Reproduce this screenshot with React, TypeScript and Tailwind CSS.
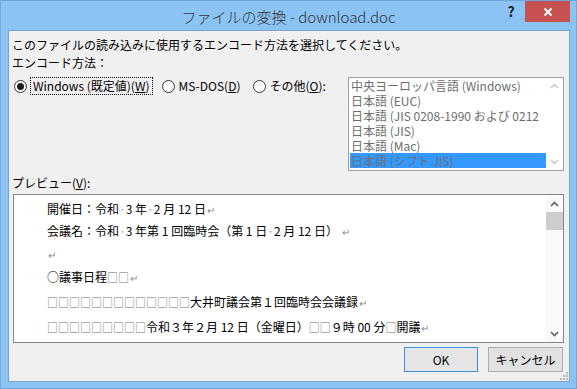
import React from "react";

const ui = { fontFamily: '"Noto Sans CJK JP", "Noto Sans", sans-serif' };

function Radio({ checked }: { checked?: boolean }) {
  return (
    <span className="w-[13px] h-[13px] rounded-full border border-[#333333] bg-white flex items-center justify-center shrink-0">
      {checked && <span className="w-[7px] h-[7px] rounded-full bg-[#1c1c1c]" />}
    </span>
  );
}

function Chevron({ up, color }: { up?: boolean; color: string }) {
  return (
    <svg width="9" height="6" viewBox="0 0 9 6">
      <path
        d={up ? "M1 5 L4.5 1.5 L8 5" : "M1 1 L4.5 4.5 L8 1"}
        fill="none"
        stroke={color}
        strokeWidth="1.6"
      />
    </svg>
  );
}

const Sp = () => <span className="text-[#9a9a9a]">·</span>;
const Ret = () => <span className="text-[#8a8a8a] text-[10px] ml-[1px]">↵</span>;
const Sq = ({ n }: { n: number }) => (
  <span className="text-[#707070] text-[11px]">{"□".repeat(n)}</span>
);

export default function App() {
  const encodings = [
    "中央ヨーロッパ言語 (Windows)",
    "日本語 (EUC)",
    "日本語 (JIS 0208-1990 および 0212",
    "日本語 (JIS)",
    "日本語 (Mac)",
    "日本語 (シフト JIS)",
  ];

  const lines: { h: string; node: React.ReactNode }[] = [
    {
      h: "h-[22px]",
      node: (
        <>
          開催日：令和<Sp />3 年<Sp />2 月 12 日<Ret />
        </>
      ),
    },
    {
      h: "h-[22px]",
      node: (
        <>
          会議名：令和<Sp />3 年第 1 回臨時会（第 1 日<Sp />2 月 12 日）&nbsp;<Ret />
        </>
      ),
    },
    { h: "h-[23px]", node: <Ret /> },
    {
      h: "h-[24px]",
      node: (
        <>
          ○議事日程<Sq n={2} />
          <Ret />
        </>
      ),
    },
    {
      h: "h-[25px]",
      node: (
        <>
          <Sq n={13} />大井町議会第１回臨時会会議録<Ret />
        </>
      ),
    },
    {
      h: "h-[25px]",
      node: (
        <>
          <Sq n={9} />令和３年２月 12 日（金曜日）<Sq n={2} />９時 00 分<Sq n={1} />開議<Ret />
        </>
      ),
    },
  ];

  return (
    <div
      className="w-[577px] h-[389px] bg-[#8cc3f5] border border-[#6fa6dc] flex flex-col overflow-hidden"
      style={ui}
    >
      {/* Title bar */}
      <div className="grid grid-cols-[1fr_auto_1fr] h-[29px] shrink-0">
        <div />
        <div className="pt-[4px] text-[15px] leading-[24px] text-[#333333] font-light">
          ファイルの変換 - download.doc
        </div>
        <div className="flex justify-end items-start">
          <span className="w-[24px] h-[21px] flex items-center justify-center text-[14px] font-bold text-[#222222] mr-[2px]">
            ?
          </span>
          <span className="w-[45px] h-[21px] bg-[#c75050] flex items-center justify-center mr-[6px]">
            <svg width="10" height="10" viewBox="0 0 10 10">
              <path d="M1.5 1.5 L8.5 8.5 M8.5 1.5 L1.5 8.5" stroke="#ffffff" strokeWidth="2" />
            </svg>
          </span>
        </div>
      </div>

      {/* Client area */}
      <div className="relative ml-[7px] mr-[6px] h-[352px] bg-[#f0f0f0] border border-[#7fa3c7] flex flex-col text-[12px] text-black">
        <div className="pt-[5px] pl-[3px] leading-[18px]">
          このファイルの読み込みに使用するエンコード方法を選択してください。
        </div>
        <div className="pl-[3px] leading-[18px]">エンコード方法：</div>

        <div className="flex mt-[5px]">
          <div className="flex items-center h-[18px] pl-[5px]">
            <Radio checked />
            <span className="ml-[3px] px-[2px] h-[18px] leading-[16px] border border-dotted border-black">
              Windows (既定値)(<span className="underline">W</span>)
            </span>
            <span className="ml-[9px]">
              <Radio />
            </span>
            <span className="ml-[4px]">
              MS-DOS(<span className="underline">D</span>)
            </span>
            <span className="ml-[13px]">
              <Radio />
            </span>
            <span className="ml-[3px]">
              その他(<span className="underline">O</span>):
            </span>
          </div>

          <div className="ml-auto mr-[5px] w-[216px] h-[94px] bg-white border border-[#a0a0a0] flex">
            <div className="flex-1 flex flex-col pl-[1px] text-[#6d6d6d] overflow-hidden">
              {encodings.map((e, i) => (
                <div
                  key={e}
                  className={`h-[15px] leading-[15px] pl-[1px] whitespace-nowrap ${
                    i === 5 ? "bg-[#3399ff]" : ""
                  }`}
                >
                  {e}
                </div>
              ))}
            </div>
            <div className="w-[17px] flex flex-col justify-between items-center py-[5px]">
              <Chevron up color="#c8c8c8" />
              <Chevron color="#c8c8c8" />
            </div>
          </div>
        </div>

        <div className="mt-[3px] pl-[3px] leading-[18px]">
          プレビュー(<span className="underline">V</span>):
        </div>

        <div className="mt-[2px] ml-[4px] w-[551px] h-[149px] bg-white border border-[#828790] flex">
          <div className="flex-1 pt-[3px] pl-[33px] text-[12px] overflow-hidden">
            {lines.map((l, i) => (
              <div key={i} className={`${l.h} flex items-center whitespace-nowrap`}>
                <span>{l.node}</span>
              </div>
            ))}
          </div>
          <div className="w-[17px] flex flex-col items-center bg-[#fafafa]">
            <div className="h-[17px] flex items-center justify-center">
              <Chevron up color="#606060" />
            </div>
            <div className="w-[17px] h-[18px] bg-[#cdcdcd]" />
            <div className="flex-1" />
            <div className="h-[17px] flex items-center justify-center">
              <Chevron color="#606060" />
            </div>
          </div>
        </div>

        <div className="flex justify-end mt-[4px] mr-[6px] gap-[10px]">
          <button className="w-[74px] h-[25px] bg-[#e5e5e5] border border-[#3c8ee6] text-[12px]">
            OK
          </button>
          <button className="w-[75px] h-[25px] bg-[#e1e1e1] border border-[#adadad] text-[12px]">
            キャンセル
          </button>
        </div>

        {/* size grip */}
        <svg className="absolute right-[1px] bottom-[1px]" width="10" height="10" viewBox="0 0 10 10">
          {[
            [8, 2],
            [8, 5],
            [5, 5],
            [8, 8],
            [5, 8],
            [2, 8],
          ].map(([x, y], i) => (
            <rect key={i} x={x} y={y} width="2" height="2" fill="#b8b8b8" />
          ))}
        </svg>
      </div>
    </div>
  );
}
